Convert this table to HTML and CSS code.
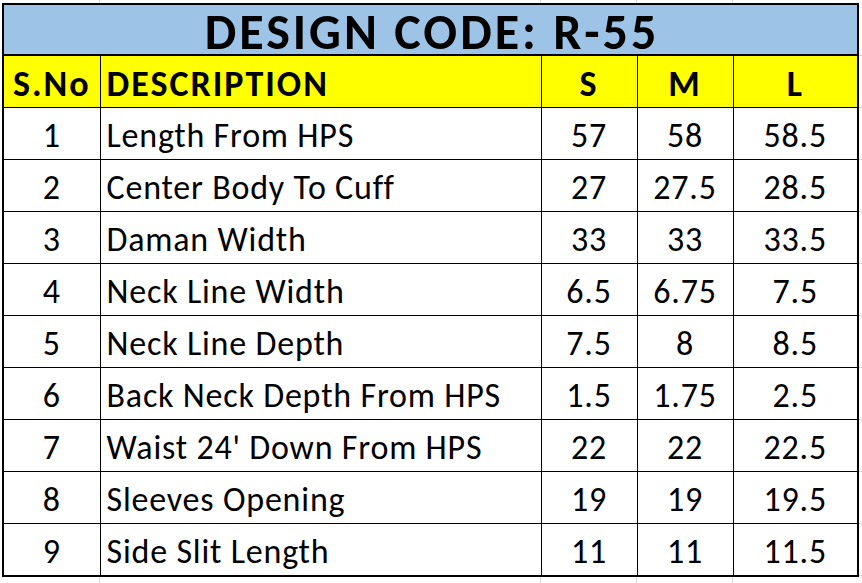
FILE: index.html
```html
<!DOCTYPE html>
<html lang="en">
<head>
<meta charset="utf-8">
<title>Design Code R-55</title>
<link rel="stylesheet" href="styles.css">
</head>
<body>
<table class="sheet">
  <colgroup>
    <col class="c-no"><col class="c-desc"><col class="c-s"><col class="c-m"><col class="c-l">
  </colgroup>
  <tr class="title-row"><td colspan="5">DESIGN CODE: R-55</td></tr>
  <tr class="head-row">
    <td class="num">S.No</td><td class="desc">DESCRIPTION</td><td class="num">S</td><td class="num">M</td><td class="num">L</td>
  </tr>
  <tr><td class="num">1</td><td class="desc">Length From HPS</td><td class="num">57</td><td class="num">58</td><td class="num">58.5</td></tr>
  <tr><td class="num">2</td><td class="desc">Center Body To Cuff</td><td class="num">27</td><td class="num">27.5</td><td class="num">28.5</td></tr>
  <tr><td class="num">3</td><td class="desc">Daman Width</td><td class="num">33</td><td class="num">33</td><td class="num">33.5</td></tr>
  <tr><td class="num">4</td><td class="desc">Neck Line Width</td><td class="num">6.5</td><td class="num">6.75</td><td class="num">7.5</td></tr>
  <tr><td class="num">5</td><td class="desc">Neck Line Depth</td><td class="num">7.5</td><td class="num">8</td><td class="num">8.5</td></tr>
  <tr><td class="num">6</td><td class="desc">Back Neck Depth From HPS</td><td class="num">1.5</td><td class="num">1.75</td><td class="num">2.5</td></tr>
  <tr><td class="num">7</td><td class="desc">Waist 24' Down From HPS</td><td class="num">22</td><td class="num">22</td><td class="num">22.5</td></tr>
  <tr><td class="num">8</td><td class="desc">Sleeves Opening</td><td class="num">19</td><td class="num">19</td><td class="num">19.5</td></tr>
  <tr><td class="num">9</td><td class="desc">Side Slit Length</td><td class="num">11</td><td class="num">11</td><td class="num">11.5</td></tr>
</table>
</body>
</html>
```
FILE: styles.css
```css
html, body {
  margin: 0;
  padding: 0;
}
body {
  width: 862px;
  height: 583px;
  overflow: hidden;
  background-color: #ffffff;
  background-image:
    linear-gradient(#d9d9d9, #d9d9d9),
    linear-gradient(#d9d9d9, #d9d9d9),
    linear-gradient(#d9d9d9, #d9d9d9),
    linear-gradient(#d9d9d9, #d9d9d9),
    repeating-linear-gradient(to bottom, transparent 0, transparent 51px, #d9d9d9 51px, #d9d9d9 52px);
  background-size: 1px 100%, 1px 100%, 1px 100%, 1px 100%, 10px 100%;
  background-position: 99px 0, 540px 0, 636px 0, 732px 0, 858px 4px;
  background-repeat: no-repeat;
  font-family: Carlito, Calibri, "Open Sans", "Liberation Sans", sans-serif;
  color: #000;
}
.sheet {
  margin: 3px 0 0 2px;
  border-collapse: collapse;
  table-layout: fixed;
  width: 855px;
  border: 2px solid #000;
  background: #fff;
}
.c-no { width: 97px; }
.c-desc { width: 441px; }
.c-s { width: 96px; }
.c-m { width: 96px; }
.c-l { width: 125px; }
.sheet td {
  border: 1px solid #000;
  padding: 0 0 6px 0;
  height: 45px;
  vertical-align: bottom;
  font-size: 34px;
  letter-spacing: 0.8px;
  line-height: 1;
  white-space: nowrap;
}
.sheet .num { text-align: center; }
.sheet .desc { text-align: left; padding-left: 6px; }
.title-row td {
  background: #9dc3e6;
  text-align: center;
  font-weight: bold;
  font-size: 50px;
  letter-spacing: 3px;
  line-height: 36px;
  height: 45px;
  padding: 0 0 4px 3px;
  border-bottom: 2px solid #000;
}
.head-row td {
  background: #ffff00;
  font-weight: bold;
  font-size: 36px;
  letter-spacing: 2px;
  height: 46px;
  padding-bottom: 5px;
}
```
